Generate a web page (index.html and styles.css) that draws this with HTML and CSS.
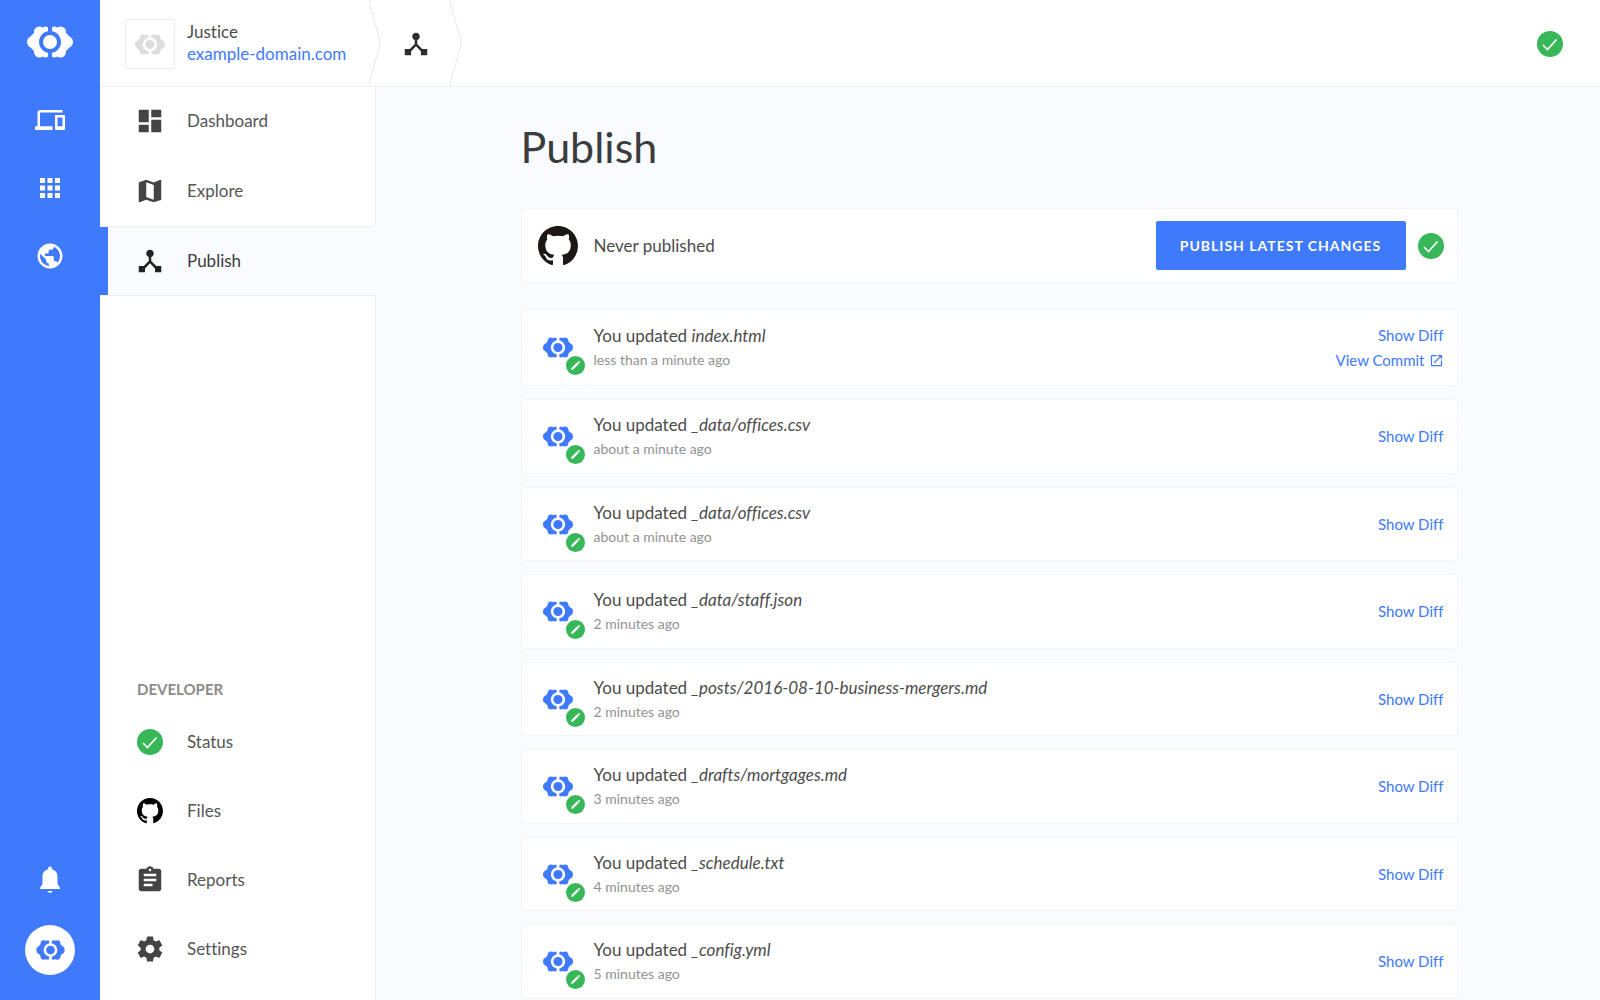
FILE: index.html
```html
<!DOCTYPE html>
<html lang="en">
<head>
<meta charset="utf-8">
<title>Publish</title>
<meta name="viewport" content="width=device-width, initial-scale=1">
<link rel="stylesheet" href="styles.css">
</head>
<body>
<svg class="sprite" aria-hidden="true">
  <mask id="ring" maskUnits="userSpaceOnUse" x="0" y="0" width="46" height="32"><rect width="46" height="32" fill="#fff"/><circle cx="23" cy="16" r="11" fill="#000"/><rect x="21" width="4" height="32" fill="#000"/></mask>
  <symbol id="logo" viewBox="0 0 46 32">
    <g mask="url(#ring)">
      <path d="M12 2 19 4 23 4V28L19 28 12 30 4 22 1 16 4 10ZM34 2 27 4 23 4V28L27 28 34 30 42 22 45 16 42 10Z"/>
      <circle cx="12.500" cy="6" r="5.500"/><circle cx="18.500" cy="3.500" r="3"/><circle cx="6" cy="16" r="6"/><circle cx="12.500" cy="26" r="5.500"/><circle cx="18.500" cy="28.500" r="3"/>
      <circle cx="33.500" cy="6" r="5.500"/><circle cx="27.500" cy="3.500" r="3"/><circle cx="40" cy="16" r="6"/><circle cx="33.500" cy="26" r="5.500"/><circle cx="27.500" cy="28.500" r="3"/>
    </g>
    <circle cx="23" cy="16" r="7"/>
  </symbol>
  <symbol id="devices" viewBox="0 0 24 24"><path d="M4 6h18V4H4c-1.100 0-2 .9-2 2v11H0v3h14v-3H4V6zm19 2h-6c-.55 0-1 .45-1 1v10c0 .55.45 1 1 1h6c.55 0 1-.45 1-1V9c0-.55-.45-1-1-1zm-1 9h-4v-7h4v7z"/></symbol>
  <symbol id="apps" viewBox="0 0 24 24"><path d="M4 8h4V4H4v4zm6 12h4v-4h-4v4zm-6 0h4v-4H4v4zm0-6h4v-4H4v4zm6 0h4v-4h-4v4zm6-10v4h4V4h-4zm-6 4h4V4h-4v4zm6 6h4v-4h-4v4zm0 6h4v-4h-4v4z"/></symbol>
  <symbol id="globe" viewBox="0 0 24 24"><path d="M12 2C6.480 2 2 6.480 2 12s4.480 10 10 10 10-4.480 10-10S17.520 2 12 2zm-1 17.930c-3.950-.49-7-3.850-7-7.930 0-.62.08-1.210.21-1.790L9 15v1c0 1.100.9 2 2 2v1.930zm6.900-2.540c-.26-.81-1-1.390-1.900-1.390h-1v-3c0-.55-.45-1-1-1H8v-2h2c.55 0 1-.45 1-1V7h2c1.100 0 2-.9 2-2v-.41c2.930 1.190 5 4.060 5 7.410 0 2.080-.8 3.970-2.100 5.390z"/></symbol>
  <symbol id="bell" viewBox="0 0 24 24"><path d="M12 24c1 0 1.800-.6 2-1.500h-4c.2.900 1 1.500 2 1.500zm6-7v-6c0-3.070-1.630-5.140-4.500-5.820V4.500c0-.83-.67-1.500-1.500-1.500s-1.500.67-1.500 1.500v.68C7.640 5.860 6 7.920 6 11v6l-2 3v1h16v-1l-2-3z" transform="translate(0 -1)"/></symbol>
  <symbol id="dashboard" viewBox="0 0 24 24"><path d="M3 13h8V3H3v10zm0 8h8v-6H3v6zm10 0h8V11h-8v10zm0-18v6h8V3h-8z"/></symbol>
  <symbol id="map" viewBox="0 0 24 24"><path d="M20.500 3l-.16.03L15 5.100 9 3 3.360 4.900c-.21.07-.36.25-.36.48V20.500c0 .28.22.5.5.5l.16-.03L9 18.900l6 2.100 5.640-1.900c.21-.07.36-.25.36-.48V3.500c0-.28-.22-.5-.5-.5zM15 19l-6-2.110V5l6 2.110V19z"/></symbol>
  <symbol id="hub" viewBox="0 0 24 24"><path d="M17 16l-4-4V8.820C14.160 8.400 15 7.300 15 6c0-1.660-1.340-3-3-3S9 4.340 9 6c0 1.300.84 2.400 2 2.820V12l-4 4H3v5h5v-3.050l4-4.200 4 4.200V21h5v-5h-4z"/></symbol>
  <symbol id="clipboard" viewBox="0 0 24 24"><path d="M19 3h-4.180C14.400 1.840 13.300 1 12 1c-1.300 0-2.400.84-2.820 2H5c-1.100 0-2 .9-2 2v14c0 1.100.9 2 2 2h14c1.100 0 2-.9 2-2V5c0-1.100-.9-2-2-2zm-7 0c.55 0 1 .45 1 1s-.45 1-1 1-1-.45-1-1 .45-1 1-1zm2 14H7v-2h7v2zm3-4H7v-2h10v2zm0-4H7V7h10v2z"/></symbol>
  <symbol id="gear" viewBox="0 0 24 24"><path d="M19.430 12.980c.04-.32.07-.64.07-.98s-.03-.66-.07-.98l2.110-1.650c.19-.15.24-.42.12-.64l-2-3.460c-.12-.22-.39-.3-.61-.22l-2.490 1c-.52-.4-1.080-.73-1.690-.98l-.38-2.650C14.460 2.180 14.250 2 14 2h-4c-.25 0-.46.18-.49.42l-.38 2.650c-.61.25-1.170.59-1.690.98l-2.490-1c-.23-.09-.49 0-.61.22l-2 3.460c-.13.22-.07.49.12.64l2.110 1.650c-.04.32-.07.65-.07.98s.03.66.07.98l-2.110 1.650c-.19.15-.24.42-.12.64l2 3.460c.12.22.39.3.61.22l2.490-1c.52.4 1.080.73 1.690.98l.38 2.650c.03.24.24.42.49.42h4c.25 0 .46-.18.49-.42l.38-2.650c.61-.25 1.170-.59 1.690-.98l2.490 1c.23.09.49 0 .61-.22l2-3.460c.12-.22.07-.49-.12-.64l-2.110-1.650zM12 15.500c-1.930 0-3.500-1.570-3.500-3.500s1.570-3.500 3.500-3.500 3.500 1.570 3.500 3.500-1.570 3.500-3.500 3.500z"/></symbol>
  <symbol id="github" viewBox="0 0 16 16"><path d="M8 0C3.580 0 0 3.580 0 8c0 3.540 2.290 6.530 5.470 7.590.4.07.55-.17.55-.38 0-.19-.01-.82-.01-1.490-2.010.37-2.530-.49-2.690-.94-.09-.23-.48-.94-.82-1.130-.28-.15-.68-.52-.01-.53.63-.01 1.080.58 1.230.82.72 1.210 1.870.87 2.330.66.07-.52.28-.87.51-1.070-1.780-.2-3.640-.89-3.640-3.950 0-.87.31-1.590.82-2.150-.08-.2-.36-1.020.08-2.120 0 0 .67-.21 2.200.82.64-.18 1.320-.27 2-.27s1.360.09 2 .27c1.530-1.040 2.200-.82 2.200-.82.44 1.100.16 1.920.08 2.120.51.56.82 1.270.82 2.150 0 3.070-1.870 3.750-3.650 3.950.29.25.54.73.54 1.480 0 1.070-.01 1.930-.01 2.200 0 .21.15.46.55.38A8.010 8.010 0 0 0 16 8c0-4.420-3.580-8-8-8z"/></symbol>
  <symbol id="check" viewBox="0 0 26 26"><circle cx="13" cy="13" r="13" fill="#38b759"/><path d="M6 14 10.500 18.500 19.500 8.500" fill="none" stroke="#fff" stroke-width="1.700"/></symbol>
  <symbol id="pencil" viewBox="0 0 20 20"><circle cx="10" cy="10" r="10" fill="#38b759"/><path d="M5.500 14.500V12.800L11.700 6.600 13.400 8.300 7.200 14.500ZM12.200 6.100 13 5.300Q13.400 5 13.800 5.300L14.700 6.200Q15 6.600 14.700 7L13.900 7.800Z" fill="#fff"/></symbol>
  <symbol id="open" viewBox="0 0 24 24"><path d="M19 19H5V5h7V3H5c-1.110 0-2 .9-2 2v14c0 1.100.89 2 2 2h14c1.100 0 2-.9 2-2v-7h-2v7zM14 3v2h3.590l-9.830 9.830 1.410 1.410L19 6.410V10h2V3h-7z"/></symbol>
</svg>

<div class="app">
  <nav class="rail" aria-label="Main">
    <a class="rail-logo" href="#" aria-label="Home"><svg><use href="#logo"/></svg></a>
    <a class="rail-link" href="#" aria-label="Sites"><svg><use href="#devices"/></svg></a>
    <a class="rail-link" href="#" aria-label="Apps"><svg><use href="#apps"/></svg></a>
    <a class="rail-link" href="#" aria-label="Community"><svg><use href="#globe"/></svg></a>
    <a class="rail-link rail-bell" href="#" aria-label="Notifications"><svg><use href="#bell"/></svg></a>
    <a class="avatar" href="#" aria-label="Account"><svg><use href="#logo"/></svg></a>
  </nav>

  <div class="workspace">
    <header class="topbar">
      <span class="site-thumb"><svg><use href="#logo"/></svg></span>
      <div class="site-name"><span>Justice</span><a href="#">example-domain.com</a></div>
      <svg class="chevron" viewBox="0 0 12 86"><path d="M.5 0Q.5 4 1.500 8L10.500 39Q11.500 43 10.500 47L1.500 78Q.5 82 .5 86"/></svg>
      <a class="crumb" href="#" aria-label="Publish"><svg><use href="#hub"/></svg></a>
      <svg class="chevron" viewBox="0 0 12 86"><path d="M.5 0Q.5 4 1.500 8L10.500 39Q11.500 43 10.500 47L1.500 78Q.5 82 .5 86"/></svg>
      <svg class="check topbar-check"><use href="#check"/></svg>
    </header>

    <div class="body">
      <nav class="sidebar" aria-label="Site">
        <a class="item" href="#"><svg><use href="#dashboard"/></svg>Dashboard</a>
        <a class="item" href="#"><svg><use href="#map"/></svg>Explore</a>
        <a class="item active" href="#" aria-current="page"><svg><use href="#hub"/></svg>Publish</a>
        <div class="filler"></div>
        <h2>DEVELOPER</h2>
        <div class="developer">
          <a class="item" href="#"><svg class="check"><use href="#check"/></svg>Status</a>
          <a class="item" href="#"><svg class="check black"><use href="#github"/></svg>Files</a>
          <a class="item" href="#"><svg><use href="#clipboard"/></svg>Reports</a>
          <a class="item" href="#"><svg><use href="#gear"/></svg>Settings</a>
        </div>
      </nav>

      <main>
        <div class="content">
          <h1>Publish</h1>
          <section class="card publish">
            <svg class="octocat"><use href="#github"/></svg>
            <p>Never published</p>
            <button type="button">PUBLISH LATEST CHANGES</button>
            <svg class="check"><use href="#check"/></svg>
          </section>
          <ul class="commits">
            <li class="card latest"><span class="author"><svg class="mark"><use href="#logo"/></svg><svg class="badge"><use href="#pencil"/></svg></span><div class="text"><p>You updated <em>index.html</em></p><time>less than a minute ago</time></div><div class="actions"><a href="#">Show Diff</a><a href="#">View Commit <svg><use href="#open"/></svg></a></div></li>
            <li class="card"><span class="author"><svg class="mark"><use href="#logo"/></svg><svg class="badge"><use href="#pencil"/></svg></span><div class="text"><p>You updated <em>_data/offices.csv</em></p><time>about a minute ago</time></div><div class="actions"><a href="#">Show Diff</a></div></li>
            <li class="card"><span class="author"><svg class="mark"><use href="#logo"/></svg><svg class="badge"><use href="#pencil"/></svg></span><div class="text"><p>You updated <em>_data/offices.csv</em></p><time>about a minute ago</time></div><div class="actions"><a href="#">Show Diff</a></div></li>
            <li class="card"><span class="author"><svg class="mark"><use href="#logo"/></svg><svg class="badge"><use href="#pencil"/></svg></span><div class="text"><p>You updated <em>_data/staff.json</em></p><time>2 minutes ago</time></div><div class="actions"><a href="#">Show Diff</a></div></li>
            <li class="card"><span class="author"><svg class="mark"><use href="#logo"/></svg><svg class="badge"><use href="#pencil"/></svg></span><div class="text"><p>You updated <em>_posts/2016-08-10-business-mergers.md</em></p><time>2 minutes ago</time></div><div class="actions"><a href="#">Show Diff</a></div></li>
            <li class="card"><span class="author"><svg class="mark"><use href="#logo"/></svg><svg class="badge"><use href="#pencil"/></svg></span><div class="text"><p>You updated <em>_drafts/mortgages.md</em></p><time>3 minutes ago</time></div><div class="actions"><a href="#">Show Diff</a></div></li>
            <li class="card"><span class="author"><svg class="mark"><use href="#logo"/></svg><svg class="badge"><use href="#pencil"/></svg></span><div class="text"><p>You updated <em>_schedule.txt</em></p><time>4 minutes ago</time></div><div class="actions"><a href="#">Show Diff</a></div></li>
            <li class="card"><span class="author"><svg class="mark"><use href="#logo"/></svg><svg class="badge"><use href="#pencil"/></svg></span><div class="text"><p>You updated <em>_config.yml</em></p><time>5 minutes ago</time></div><div class="actions"><a href="#">Show Diff</a></div></li>
          </ul>
        </div>
      </main>
    </div>
  </div>
</div>
</body>
</html>
```
FILE: styles.css
```css
:root {
  --blue: #407afc;
  --line: #eeeff0;
  --page: #fafbff;
}

* {
  box-sizing: border-box;
}

body {
  margin: 0;
  color: #4c4c4c;
  background: var(--page);
  font: 17px/24px Lato, "Open Sans", sans-serif;
  font-variant-ligatures: none;
}

h1, h2, p, ul {
  margin: 0;
  padding: 0;
}

a {
  color: var(--blue);
  text-decoration: none;
}

svg {
  display: block;
  flex: none;
  fill: currentColor;
}

.sprite {
  position: absolute;
  width: 0;
  height: 0;
}

.app {
  display: flex;
  height: 100vh;
}

/* Blue rail */
.rail {
  display: flex;
  flex-direction: column;
  align-items: center;
  width: 100px;
  padding: 26px 0 25px;
  background: var(--blue);
}

.rail a {
  color: #fff;
}

.rail-logo {
  margin-bottom: 28px;
}

.rail-logo svg {
  width: 46px;
  height: 32px;
}

.rail-link {
  display: grid;
  place-items: center;
  height: 68px;
}

.rail-link svg {
  width: 30px;
  height: 30px;
}

.rail-bell {
  margin-top: auto;
}

.rail .avatar {
  display: grid;
  place-items: center;
  width: 50px;
  height: 50px;
  margin-top: 12px;
  border-radius: 50%;
  background: #fff;
  color: var(--blue);
}

.avatar svg {
  width: 29px;
  height: 20px;
}

.workspace {
  display: flex;
  flex: 1;
  flex-direction: column;
  min-width: 0;
}

/* Top bar */
.topbar {
  position: relative;
  display: flex;
  align-items: center;
  height: 86px;
  padding: 0 37px 0 25px;
  background: #fff;
  box-shadow: 0 1px var(--line);
}

.site-thumb,
.crumb,
.topbar-check {
  margin-top: 2px;
}

.site-thumb {
  display: grid;
  place-items: center;
  width: 50px;
  height: 50px;
  margin-right: 12px;
  border: 1px solid #ececec;
  border-radius: 2px;
  color: #ddd;
}

.site-thumb svg {
  width: 30px;
  height: 21px;
}

.site-name {
  display: flex;
  flex-direction: column;
  width: 182px;
  line-height: 22px;
}

.chevron {
  width: 12px;
  height: 86px;
  fill: none;
  stroke: #e8e8e8;
}

.crumb {
  display: grid;
  place-items: center;
  width: 69px;
  color: #2d2e2f;
}

.crumb svg {
  width: 30px;
  height: 30px;
}

.check {
  width: 26px;
  height: 26px;
}

.topbar-check {
  margin-left: auto;
}

.body {
  display: flex;
  flex: 1;
  min-height: 0;
}

/* Sidebar */
.sidebar {
  display: flex;
  flex-direction: column;
  width: 276px;
  padding-bottom: 17px;
  background: linear-gradient(#fff, #fff) left / calc(100% - 1px) no-repeat, var(--line);
}

.item {
  display: flex;
  align-items: center;
  gap: 22px;
  height: 70px;
  padding-left: 35px;
  color: #555;
}

.item svg {
  width: 30px;
  height: 30px;
  color: #444;
}

.item .check {
  width: 26px;
  height: 26px;
  margin: 0 2px;
}

.item .black {
  color: #000;
}

.item.active {
  border: solid var(--line);
  border-width: 1px 0;
  background: linear-gradient(var(--blue), var(--blue)) left / 8px no-repeat border-box, var(--page);
  color: #3c3c3c;
}

.active svg {
  color: #222;
}

.filler {
  flex: 1;
}

.sidebar h2 {
  padding: 0 0 6px 37px;
  color: #8b8b8b;
  font-size: 15px;
  font-weight: 700;
}

.developer .item {
  height: 69px;
}

/* Content */
main {
  flex: 1;
  min-width: 0;
  padding: 36px 48px 0 50px;
  overflow-y: auto;
  scrollbar-width: none;
}

.content {
  max-width: 937px;
  margin: 0 auto;
}

h1 {
  margin-bottom: 36px;
  color: #3a3c3e;
  font-size: 43px;
  font-weight: 400;
  line-height: 50px;
}

.card {
  display: flex;
  align-items: center;
  height: 74px;
  padding: 0 13px 0 16px;
  border: 1px solid #f2f3f6;
  border-radius: 3px;
  background: #fff;
}

.card:nth-child(even) {
  height: 75px;
}

.card.latest {
  height: 77px;
}

.publish {
  margin-bottom: 26px;
}

.octocat {
  width: 40px;
  height: 40px;
  margin-right: 16px;
  color: #1b1817;
}

.publish button {
  width: 250px;
  height: 49px;
  margin: 0 12px 0 auto;
  border: 0;
  border-radius: 2px;
  background: var(--blue);
  color: #fff;
  font: 700 14px/20px Lato, "Open Sans", sans-serif;
  letter-spacing: 1px;
}

.commits {
  display: flex;
  flex-direction: column;
  gap: 13px;
  list-style: none;
}

.author {
  position: relative;
  width: 40px;
  margin-right: 16px;
}

.mark {
  width: 30px;
  height: 21px;
  margin: 0 auto;
  color: var(--blue);
}

.badge {
  position: absolute;
  top: 19px;
  left: 28px;
  width: 19px;
  height: 19px;
}

.commits .text {
  padding-top: 1px;
}

.commits time {
  display: block;
  color: #929292;
  font-size: 14px;
}

.actions {
  display: flex;
  flex-direction: column;
  align-items: flex-end;
  margin-left: auto;
  font-size: 15px;
  line-height: 25px;
}

.actions a {
  display: flex;
  align-items: center;
  gap: 4px;
}

.actions svg {
  width: 15px;
  height: 15px;
}
```
